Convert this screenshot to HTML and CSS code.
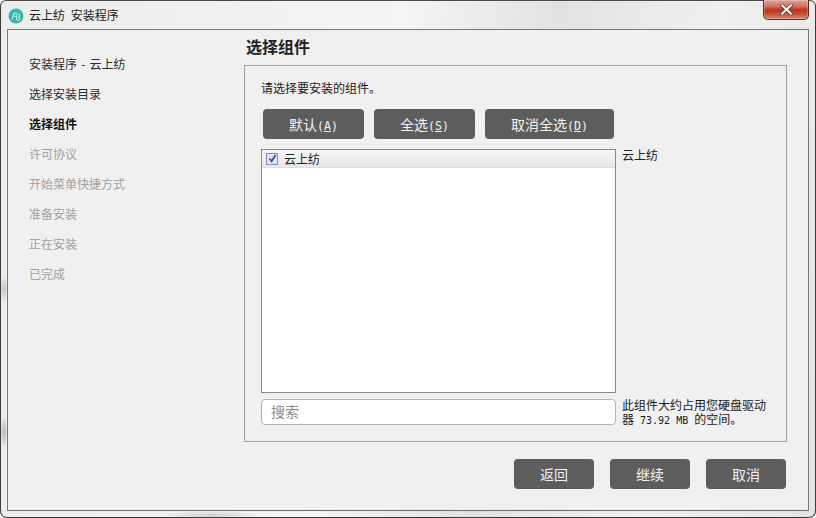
FILE: index.html
```html
<!DOCTYPE html>
<html lang="zh-CN">
<head>
<meta charset="utf-8">
<title>云上纺 安装程序</title>
<link rel="stylesheet" href="styles.css">
</head>
<body>
<div class="window">
  <header class="titlebar">
    <svg class="app-icon" width="16" height="16" viewBox="0 0 16 16"><circle cx="8" cy="8" r="7.5" fill="#36b9a0"/><path d="M4 11.5 6.2 5h2.6M5.2 8.2h2.6M8.6 11V7.5a1.6 1.6 0 1 1 1.6 1.7 1.6 1.6 0 1 1-1.6 1.8" fill="none" stroke="#d8f4ee" stroke-width="1"/></svg>
    <span class="title-text">云上纺 安装程序</span>
    <button class="close" aria-label="关闭"><svg width="13" height="11" viewBox="0 0 13 11"><path d="M2 1.5 11 9.5M11 1.5 2 9.5" stroke="#4a3a3a" stroke-width="3.6" stroke-linecap="square"/><path d="M2.2 1.5 10.8 9.5M10.8 1.5 2.2 9.5" stroke="#f6f2f0" stroke-width="2.2" stroke-linecap="square"/></svg></button>
  </header>
  <div class="client">
    <nav class="steps">
      <div class="step">安装程序 - 云上纺</div>
      <div class="step">选择安装目录</div>
      <div class="step current">选择组件</div>
      <div class="step pending">许可协议</div>
      <div class="step pending">开始菜单快捷方式</div>
      <div class="step pending">准备安装</div>
      <div class="step pending">正在安装</div>
      <div class="step pending">已完成</div>
    </nav>
    <main class="page">
      <h1 class="page-title">选择组件</h1>
      <section class="group">
        <p class="intro">请选择要安装的组件<span class="punct">。</span></p>
        <div class="actions">
          <button class="btn w-101">默认<span class="mono">(<u>A</u>)</span></button>
          <button class="btn w-101">全选<span class="mono">(<u>S</u>)</span></button>
          <button class="btn w-129">取消全选<span class="mono">(<u>D</u>)</span></button>
        </div>
        <div class="picker">
          <div class="left-col">
            <div class="list">
              <div class="row">
                <span class="check"><svg width="9" height="9" viewBox="0 0 9 9"><path d="M1.5 4.5 3.6 7.3 7.6 1" fill="none" stroke="#3c4f96" stroke-width="1.7"/></svg></span>
                <span>云上纺</span>
              </div>
            </div>
            <div class="search">搜索</div>
          </div>
          <div class="right-col">
            <div class="desc">云上纺</div>
            <div class="size">此组件大约占用您硬盘驱动器<span class="mono-s"> 73.92 MB </span>的空间<span class="punct">。</span></div>
          </div>
        </div>
      </section>
      <footer class="nav-buttons">
        <button class="btn w-80">返回</button>
        <button class="btn w-80">继续</button>
        <button class="btn w-80">取消</button>
      </footer>
    </main>
  </div>
</div>
</body>
</html>
```
FILE: styles.css
```css
* { box-sizing: border-box; }
html, body { margin: 0; height: 100%; overflow: hidden; background: #fff; }
body { font-family: "Noto Sans CJK SC", "Liberation Sans", sans-serif; font-size: 12px; color: #1c1c1c; }

.window {
  width: 816px; height: 518px;
  display: flex; flex-direction: column;
  padding: 0 6px 6px;
  border: 1px solid #3a3a3a;
  border-top-color: #4a4a4a;
  border-radius: 6px 6px 7px 7px;
  background:
    radial-gradient(ellipse 4px 16px at 3px 431px, #b4b4b4, transparent),
    radial-gradient(ellipse 4px 14px at 3px 288px, #c4c4c4, transparent),
    radial-gradient(ellipse 50px 4px at 210px 514px, #cfcfcf, transparent),
    linear-gradient(100deg, #ececec 0%, #f4f4f4 45%, #e4e2e0 62%, #f1f0ef 80%, #e6e4e2 100%);
}
.titlebar { height: 28px; flex: none; display: flex; align-items: center; margin-left: -6px; padding-left: 7px; position: relative; }
.app-icon { flex: none; margin-top: 1px; }
.title-text { margin-left: 5px; font-size: 12px; line-height: 16px; color: #222; word-spacing: 3px; }
.close {
  position: absolute; left: 762px; top: -1px;
  width: 46px; height: 20px; padding: 0 0 1px; border: 1px solid #5c2a24; border-top: 0;
  border-radius: 0 0 5px 5px;
  display: flex; align-items: center; justify-content: center;
  background: linear-gradient(#dda596 0%, #d0705c 35%, #b8321f 52%, #c9503a 75%, #dc8d78 100%);
  box-shadow: inset 0 0 0 1px rgba(255,255,255,.25);
}

.client {
  flex: 1; display: flex; min-height: 0;
  background: #f0f0f0;
  border: 1px solid #7a7a7a;
  border-bottom-color: #6a6a6a;
  padding: 2px 21px 0 21px;
}
.steps { width: 215px; flex: none; padding-top: 17px; }
.step { height: 30px; line-height: 30px; white-space: nowrap; color: #2b2b2b; word-spacing: 1.5px; }
.step.current { font-weight: 700; color: #111; }
.step.pending { color: #a0a0a0; }

.page { flex: 1; min-width: 0; display: flex; flex-direction: column; }
.page-title { margin: 0; height: 33px; padding-left: 2px; font-size: 16px; line-height: 28px; font-weight: 700; color: #222; }
.group {
  width: 543px; height: 377px; flex: none;
  border: 1px solid #a0a0a0;
  padding: 13px 16px 0;
  display: flex; flex-direction: column;
}
.intro { margin: 0; height: 18px; line-height: 18px; color: #1a1a1a; }
.punct { font-family: "Noto Sans CJK TC", sans-serif; }
.actions { display: flex; gap: 10px; margin: 12px 0 10px 2px; }
.btn {
  height: 30px; padding: 0; border: 0; border-radius: 4px;
  background: #5d5d5d; color: #f2f2f2;
  font: 14px/30px "Noto Sans CJK SC", "Liberation Sans", sans-serif;
  white-space: nowrap;
}
.w-101 { width: 101px; }
.w-129 { width: 129px; }
.w-80 { width: 80px; }
.mono { font-family: "DejaVu Sans Mono", monospace; font-size: 11.6px; }

.picker { display: flex; gap: 6px; }
.left-col { width: 355px; flex: none; display: flex; flex-direction: column; gap: 6px; }
.list { height: 244px; background: #fff; border: 1px solid #8a8a8a; padding: 0; }
.row {
  height: 18px; display: flex; align-items: center; gap: 6px; padding-left: 4px;
  background: linear-gradient(#f6f6f6, #e8e8e8);
  border-bottom: 1px solid #dcdcdc;
  line-height: 18px; color: #222;
}
.check {
  width: 12px; height: 12px; flex: none; display: flex; align-items: center; justify-content: center;
  border: 1px solid #8c90a8; background: #dfe3ef;
}
.search {
  height: 26px; line-height: 23px; padding-left: 9px;
  border: 1px solid #b4b4b4; border-radius: 4px; background: #fff;
  font-size: 14px; color: #8a8a8a;
}
.right-col { width: 150px; flex: none; display: flex; flex-direction: column; justify-content: space-between; }
.desc { line-height: 14px; margin-top: -1px; color: #222; }
.size { line-height: 14px; height: 28px; margin-bottom: -1px; color: #1a1a1a; }
.mono-s { font-family: "DejaVu Sans Mono", monospace; font-size: 10px; white-space: pre; }

.nav-buttons { display: flex; gap: 16px; margin-top: 17px; width: 542px; justify-content: flex-end; }
```
